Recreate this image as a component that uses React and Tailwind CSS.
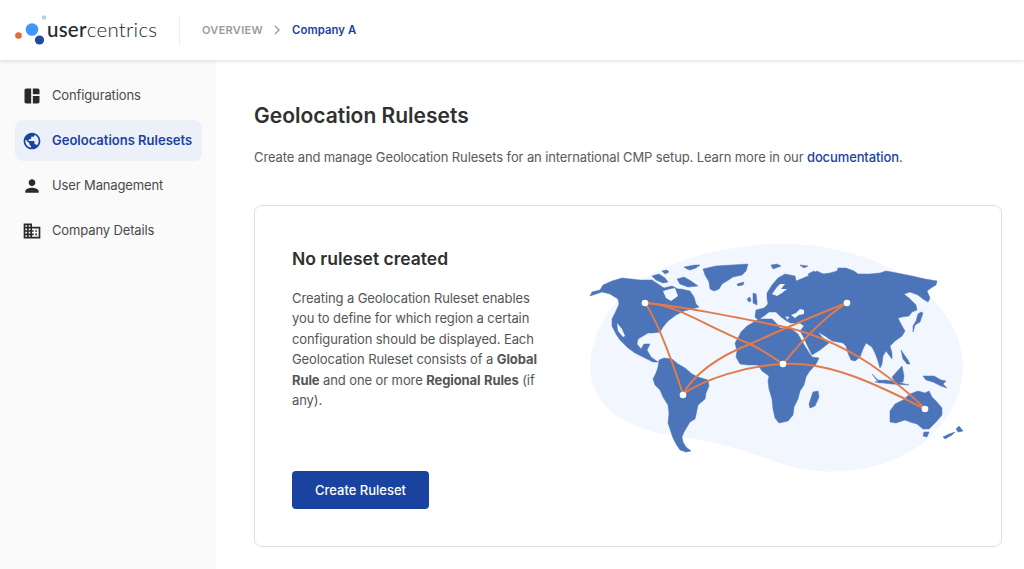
import React from "react";
import { MdSpaceDashboard, MdPublic, MdPerson, MdBusiness } from "react-icons/md";

function WorldMap() {
  const land = "#4c74b9";
  const sea = "#f2f6fe";
  const route = "#e27b4c";
  return (
    <svg viewBox="585 240 385 235" width="385" height="235" className="block shrink-0">
      <path fill={sea} d="M590 365C592 335 605 310 625 292C650 268 700 248 770 243C815 241 870 252 905 276C940 298 963 330 963 365C963 405 935 440 900 456C865 472 820 476 780 462C745 450 720 441 680 436C640 431 605 415 596 390C592 382 590 375 590 365Z" />
      <g fill={land} stroke={land} strokeWidth="0.5" strokeLinejoin="round">
        {/* North America */}
        <path d="M590 295L592 291L600 289L603 284L612 280L622 277L640 279L652 279L658 283L664 287L672 285L678 288L681 288L690 290L694 296L696 303L699 306L692 308L684 310L676 314L668 320L663 326L660 331L653 332L648 332L643 335L638 338L637 343L641 348L644 343L650 343L647 349L651 356L658 361L653 361L645 357L635 352L628 347L620 339L616 333L612 325L612 318L616 310L619 303L618 298L610 293L602 291L596 293Z" />
        <path fill={sea} stroke="none" d="M663 290L670 288L675 287L678 295L671 300L666 297Z" />
        <path fill={sea} stroke="none" d="M617 322L622 328L625 335L623 336L618 330Z" />
        {/* Canadian islands */}
        <path d="M652 275L659 273L665 277L668 281L663 282L656 279Z" />
        <path d="M677 278L684 276L691 280L698 285L688 286L680 283Z" />
        <path d="M662 270L667 269L669 271L665 273Z" />
        <path d="M684 266L695 264L700 264L696 267L690 269L687 268Z" />
        {/* Greenland */}
        <path d="M703 268L716 265L748 263L746 270L742 274L733 276L727 280L722 283L719 288L714 290L710 288L709 281L705 274Z" />
        <path d="M737 283L744 281L743 284L738 285Z" />
        {/* South America */}
        <path d="M659 359L664 357L672 358L678 363L685 367L692 373L698 376L708 379L709 385L706 392L705 398L698 404L697 409L695 418L690 421L687 426L684 431L682 436L683 441L686 446L691 450L686 451L680 449L676 443L673 437L670 428L668 422L669 412L668 404L663 396L660 389L655 384L653 378L656 372L658 366Z" />
        {/* Africa */}
        <path d="M735 342L738 337L741 331L747 325L754 321L760 318L772 318L776 322L780 327L790 327L798 333L803 342L808 350L812 356L819 357L816 363L809 371L806 376L804 384L800 390L798 398L794 406L793 414L788 420L779 422L775 417L773 408L772 398L769 388L768 380L769 375L762 370L758 364L748 364L740 363L736 356L737 350Z" />
        <path d="M813 391L818 390L819 396L815 405L810 407L809 403Z" />
        {/* Eurasia */}
        <path d="M755 316L756 309L764 307L768 303L767 297L767 292L772 284L778 277L785 273L795 275L796 280L801 278L808 275L817 270L823 273L830 272L837 270L838 267L846 267L854 270L858 273L870 273L880 272L886 270L897 272L912 275L925 278L937 280L936 284L931 287L927 290L930 297L928 301L923 298L918 294L910 291L904 293L910 298L916 304L917 309L912 311L909 315L902 316L898 317L901 323L905 330L902 335L895 340L890 345L892 352L892 358L889 354L886 350L883 355L882 363L880 367L878 360L875 352L872 346L866 342L863 348L860 356L855 360L851 359L848 352L846 345L843 342L832 340L825 335L818 331L822 336L829 342L820 349L812 354L808 346L803 335L800 330L804 325L800 322L790 322L787 319L790 316L785 315L788 321L781 316L776 311L769 311L764 315L758 319Z" />
        <path fill={sea} stroke="none" d="M772 293L777 286L780 283L785 283L781 288L787 288L782 292L777 295Z" />
        <path fill={sea} stroke="none" d="M791 314L796 312L800 308L804 309L804 313L799 314L795 317Z" />
        {/* UK, Europe north */}
        <path d="M747 298L750 296L751 300L749 301Z" />
        <path d="M753 292L756 293L757 300L757 304L753 302Z" />
        <path d="M771 264L777 263L781 265L773 268Z" />
        <path d="M800 264L808 265L804 267Z" />
        <path d="M808 273L814 270L816 272L810 276Z" />
        <path d="M822 272L826 276L827 278L823 276Z" />
        {/* Asia islands */}
        <path d="M918 283L923 290L922 292Z" />
        <path d="M918 313L921 311L923 312L920 321L915 324L913 331L913 325L916 320Z" />
        <path d="M901 349L903 352L908 359L910 363L907 363L903 358Z" />
        <path d="M892 376L902 365L904 375L903 381L896 382Z" />
        <path d="M875 381L885 379L897 381L909 384L892 383Z" />
        <path d="M872 373L878 379L886 380L879 382Z" />
        <path d="M923 375L934 375L941 379L946 380L943 383L947 387L941 385L933 381L926 379Z" />
        {/* Australia */}
        <path d="M890 410L895 403L903 399L910 393L918 390L925 392L929 390L932 396L936 400L942 407L942 414L936 421L929 428L923 428L917 423L910 421L905 419L896 422L890 421Z" />
        <path d="M924 431L929 431L927 436L923 435Z" />
        <path d="M943 436L949 433L955 431L952 434L945 438Z" />
        <path d="M956 428L959 425L963 430L958 431Z" />
      </g>
      <g fill="none" stroke={route} strokeWidth="2" strokeLinecap="round">
        <path d="M645 302C680 305 730 315 780 325C820 333 850 350 870 363C890 377 910 392 925 408" />
        <path d="M645 302C675 303 700 322 750 343C765 350 775 358 783 363" />
        <path d="M645 302C658 320 672 360 683 393" />
        <path d="M683 393C695 372 720 355 750 343C790 325 820 312 847 302" />
        <path d="M683 393C705 378 745 365 783 363C830 360 880 385 925 408" />
        <path d="M783 363C800 342 822 317 847 302" />
      </g>
      <g fill="#fff">
        <circle cx="645" cy="302" r="3.3" />
        <circle cx="847" cy="302" r="3.3" />
        <circle cx="683" cy="394" r="3.3" />
        <circle cx="783" cy="363" r="3.3" />
        <circle cx="925" cy="408" r="3.3" />
      </g>
    </svg>
  );
}

function Logo() {
  return (
    <div className="flex items-center w-[164px] ml-[15px]">
      <svg width="32" height="32" viewBox="15 14 32 32" className="block shrink-0">
        <circle cx="18.5" cy="35.5" r="3.3" fill="#e9692c" />
        <circle cx="32" cy="29.5" r="6.3" fill="#3f97fb" />
        <circle cx="39.5" cy="40" r="4.6" fill="#1d4aa3" />
        <circle cx="44" cy="17.5" r="2.2" fill="#b9cde3" />
      </svg>
      <span className="text-[20.5px] leading-none tracking-[0.25px] text-[#22272e] font-['Lato',sans-serif] -mt-[2px]">
        <span className="font-medium">user</span>
        <span className="font-light">centrics</span>
      </span>
    </div>
  );
}

function NavItem({ icon: Icon, label, active }) {
  return (
    <div className={`flex items-center h-[41px] ml-[15px] mr-[14px] pl-[7px] rounded-[8px] ${active ? "bg-[#ebf0f9] text-[#1a43a0] font-semibold" : "text-[#4a4a4a] tracking-[-0.13px]"}`}>
      <Icon size={20} className={active ? "text-[#1a43a0]" : "text-[#2a2a2a]"} />
      <span className="ml-[10px] text-[13px]">{label}</span>
    </div>
  );
}

export default function App() {
  return (
    <div className="h-[569px] overflow-hidden flex flex-col bg-white font-['Inter',sans-serif]">
      <header className="relative z-10 h-[60px] shrink-0 flex items-center bg-white shadow-[0_1px_4px_rgba(0,0,0,0.14)]">
        <Logo />
        <div className="w-px h-[30px] bg-[#eeeeee]" />
        <nav className="flex items-center ml-[22px] text-[11px] font-semibold">
          <span className="text-[#9b9b9b] tracking-[0.3px]">OVERVIEW</span>
          <svg width="8" height="10" viewBox="0 0 8 10" className="ml-[10px] mr-[11px]">
            <path d="M2 1l4 4-4 4" fill="none" stroke="#9b9b9b" strokeWidth="1.4" />
          </svg>
          <span className="text-[#1a43a0] text-[11.3px] tracking-[0.1px]">Company A</span>
        </nav>
      </header>
      <div className="flex-1 flex min-h-0">
        <aside className="w-[216px] shrink-0 bg-[#fafafa] pt-[15px] flex flex-col gap-[4px]">
          <NavItem icon={MdSpaceDashboard} label="Configurations" />
          <NavItem icon={MdPublic} label="Geolocations Rulesets" active />
          <NavItem icon={MdPerson} label="User Management" />
          <NavItem icon={MdBusiness} label="Company Details" />
        </aside>
        <main className="flex-1 pl-[38px] pr-[22px] pt-[41px]">
          <h1 className="text-[21px] leading-[30px] font-semibold text-[#303030]">Geolocation Rulesets</h1>
          <p className="mt-[16px] text-[13px] leading-[20px] tracking-[-0.12px] text-[#5a5a5a]">
            Create and manage Geolocation Rulesets for an international CMP setup. Learn more in our{" "}
            <span className="text-[#1a43a0] font-medium">documentation</span>.
          </p>
          <section className="mt-[38px] h-[342px] border border-[#dedede] rounded-[8px] flex pl-[37px] pr-[31px] justify-between">
            <div className="w-[252px] pt-[41px] flex flex-col">
              <h2 className="text-[17.5px] leading-[24px] font-semibold text-[#303030]">No ruleset created</h2>
              <p className="mt-[17px] text-[13px] leading-[20.4px] tracking-[-0.1px] text-[#555555]">
                Creating a Geolocation Ruleset enables you to define for which region a certain configuration should be displayed. Each Geolocation Ruleset consists of a <b className="font-bold">Global</b> <b className="font-bold">Rule</b> and one or more <b className="font-bold">Regional</b> <b className="font-bold">Rules</b> (if any).
              </p>
              <button className="mt-[61px] w-[137px] h-[38px] rounded-[4px] bg-[#1a43a0] text-white text-[13px] font-medium">Create Ruleset</button>
            </div>
            <div className="pt-[35px]"><WorldMap /></div>
          </section>
        </main>
      </div>
    </div>
  );
}
